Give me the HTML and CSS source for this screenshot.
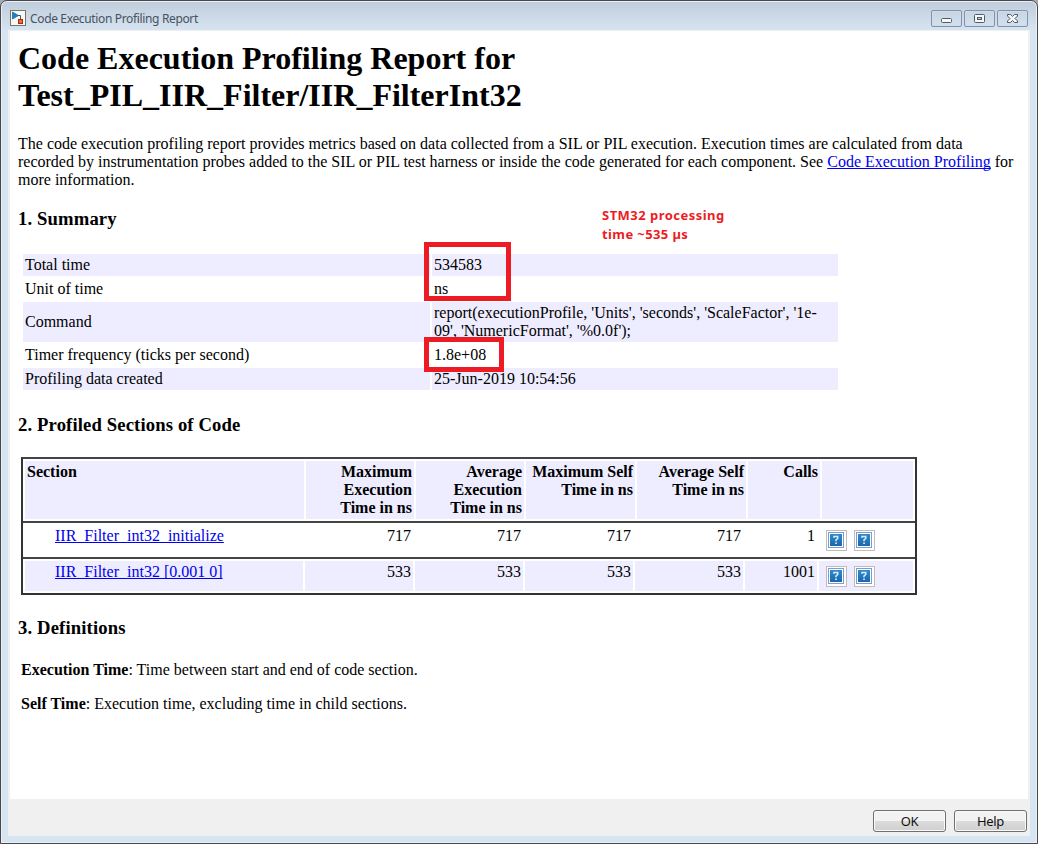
FILE: index.html
```html
<!DOCTYPE html>
<html lang="en">
<head>
<meta charset="utf-8">
<title>Code Execution Profiling Report</title>
<link rel="stylesheet" href="styles.css">
</head>
<body>
<svg width="0" height="0" class="defs" aria-hidden="true">
  <linearGradient id="blue" x1="0" y1="0" x2="0" y2="1"><stop offset="0" stop-color="#2f8acb"/><stop offset="1" stop-color="#1c68ad"/></linearGradient>
  <symbol id="help" viewBox="0 0 21 21">
    <rect x=".5" y=".5" width="20" height="20" fill="#fff" stroke="#bdbdbd"/>
    <rect x="2.5" y="2.5" width="15" height="15" fill="#fff" stroke="#7d9cd0"/>
    <rect x="4" y="4" width="12" height="12" fill="url(#blue)"/>
    <path d="M8 7.8V6.5H11.7V8.5L10 10V11.3M9.2 13.3H10.9" fill="none" stroke="#d9ecf8" stroke-width="1.6"/>
  </symbol>
</svg>
<div class="window">
  <header class="titlebar">
    <svg class="app-icon" width="16" height="16" viewBox="0 0 16 16">
      <rect x=".5" y=".5" width="15" height="15" fill="#f7f7f5" stroke="#77736d"/>
      <path d="M8 5.5H10.5V9" fill="none" stroke="#47555c"/>
      <path d="M2.5 2L8.5 5.5L2.5 9Z" fill="#1686ca" stroke="#17608d" stroke-width=".7"/>
      <rect x="8.5" y="9.5" width="4" height="4" fill="#ef683c" stroke="#a72c13"/>
    </svg>
    <span class="title">Code Execution Profiling Report</span>
    <div class="controls">
      <span class="control"><svg width="29" height="15" viewBox="0 0 29 15"><rect x="9.5" y="7.5" width="10" height="4" rx="1" fill="#f6f7f8" stroke="#535866"/></svg></span>
      <span class="control"><svg width="29" height="15" viewBox="0 0 29 15"><rect x="9.5" y="3.5" width="10" height="8" rx="1" fill="#f6f7f8" stroke="#535866"/><rect x="12.5" y="6.5" width="4" height="2" fill="#bfcddd" stroke="#535866"/></svg></span>
      <span class="control"><svg width="29" height="15" viewBox="0 0 29 15"><path d="M9.5 3.5H12.5L14.5 5.5L16.5 3.5H19.5V5L17 7.5L19.5 10V11.5H16.5L14.5 9.5L12.5 11.5H9.5V10L12 7.5L9.5 5Z" fill="#f6f7f8" stroke="#535866"/></svg></span>
    </div>
  </header>
  <div class="client">
    <main class="report">
      <h1>Code Execution Profiling Report for<br>Test_PIL_IIR_Filter/IIR_FilterInt32</h1>
      <p class="intro">The code execution profiling report provides metrics based on data collected from a SIL or PIL execution. Execution times are calculated from data<br>recorded by instrumentation probes added to the SIL or PIL test harness or inside the code generated for each component. See <a href="#">Code Execution Profiling</a> for<br>more information.</p>
      <h2 class="h-summary">1. Summary</h2>
      <div class="summary">
        <span class="shade">Total time</span><span class="shade">534583</span>
        <span>Unit of time</span><span>ns</span>
        <span class="shade">Command</span><span class="shade">report(executionProfile, 'Units', 'seconds', 'ScaleFactor', '1e-<br>09', 'NumericFormat', '%0.0f');</span>
        <span>Timer frequency (ticks per second)</span><span>1.8e+08</span>
        <span class="shade">Profiling data created</span><span class="shade">25-Jun-2019 10:54:56</span>
        <i class="mark mark-time"></i>
        <i class="mark mark-freq"></i>
        <b class="note">STM32 processing<br><span class="note-line">time ~535 µs</span></b>
      </div>
      <h2 class="h-sections">2. Profiled Sections of Code</h2>
      <div class="sections">
        <div class="row head">
          <span>Section</span><span>Maximum<br>Execution<br>Time in ns</span><span>Average<br>Execution<br>Time in ns</span><span>Maximum Self<br>Time in ns</span><span>Average Self<br>Time in ns</span><span>Calls</span><span></span>
        </div>
        <div class="row">
          <span><a href="#">IIR_Filter_int32_initialize</a></span><span>717</span><span>717</span><span>717</span><span>717</span><span>1</span><span class="icons"><svg><use href="#help"/></svg><svg><use href="#help"/></svg></span>
        </div>
        <div class="row tinted">
          <span><a href="#">IIR_Filter_int32 [0.001 0]</a></span><span>533</span><span>533</span><span>533</span><span>533</span><span>1001</span><span class="icons"><svg><use href="#help"/></svg><svg><use href="#help"/></svg></span>
        </div>
      </div>
      <h2 class="h-definitions">3. Definitions</h2>
      <p class="definition"><b>Execution Time</b>: Time between start and end of code section.</p>
      <p class="definition"><b>Self Time</b>: Execution time, excluding time in child sections.</p>
    </main>
    <footer class="footer"><button>OK</button><button>Help</button></footer>
  </div>
</div>
</body>
</html>
```
FILE: styles.css
```css
* { box-sizing: border-box; }
body { margin: 0; background: #a9aaad; overflow: hidden; }
.defs { position: absolute; }
.window {
  width: 1038px; height: 844px; padding: 0 7px 7px 6px;
  display: flex; flex-direction: column;
  border: 1px solid #4b484d; border-radius: 7px 7px 0 0;
  box-shadow: inset 0 0 0 1px #e9eff6;
  background: linear-gradient(#bfcddb 0, #d7e4f2 30px, #d7e4f2 100%);
}
.titlebar { flex: none; height: 29px; display: flex; align-items: flex-start; padding: 9px 2px 0 3px; }
.title { margin: 1px 0 0 4px; font: 12px/16px "Noto Sans", sans-serif; color: #48525f; letter-spacing: -.35px; white-space: nowrap; }
.controls { margin-left: auto; display: flex; gap: 2px; }
.control { width: 31px; height: 17px; border: 1px solid #8390ae; border-radius: 2px; box-shadow: inset 0 0 0 1px #d0dce8; }
.control svg { display: block; }
.client { flex: 1; min-height: 0; margin-left: 1px; display: flex; flex-direction: column; background: #f0f0f0; padding: 1px 2px 0 2px; }
.report { flex: none; height: 768px; background: #fff; padding: 9px 0 0 8px; font: 16px/18px "Liberation Serif", serif; color: #000; white-space: nowrap; }
h1 { margin: 0; font-size: 32px; line-height: 37px; }
.intro { margin: 21px 0 0; }
h2 { margin: 0; font-size: 18.67px; line-height: 22px; letter-spacing: .13px; }
a { color: #00e; text-decoration-skip-ink: none; }
.h-summary { margin-top: 19px; }
.summary { position: relative; width: 815px; margin: 24px 0 0 5px; display: grid; grid-template-columns: 407px 406px; gap: 2px; }
.summary > span { padding: 2px; display: flex; align-items: center; }
.shade { background: #eeedff; }
.mark { position: absolute; border: 5px solid #ed1c24; }
.mark-time { left: 401px; top: -12px; width: 87px; height: 59px; }
.mark-freq { left: 401px; top: 83px; width: 80px; height: 35px; }
.note { position: absolute; left: 579px; top: -48px; font: bold 13px/19px "Noto Sans", sans-serif; letter-spacing: .47px; color: #ed1c24; }
.note-line { letter-spacing: .4px; }
.h-sections { margin-top: 24px; }
.sections { width: 896px; margin: 21px 0 0 3px; border: 2px solid #333; border-top-color: #444; }
.row { display: grid; grid-template-columns: 278px 108px 108px 108px 108px 72px 94px; gap: 2px; padding: 2px; height: 36px; border-top: 2px solid #444; }
.row > span { padding: 2px; text-align: right; }
.row > span:first-child { text-align: left; padding-left: 30px; }
.row.head { grid-template-columns: 279px 108px 108px 109px 109px 72px 91px; height: 62px; border: 0; font-weight: bold; }
.row.head > span { background: #eeedff; }
.row.head > span:first-child { padding-left: 2px; }
.row.tinted > span { background: #eeedff; }
.row > .icons { display: flex; gap: 7px; padding: 5px 0 0 7px; }
.icons svg { width: 21px; height: 21px; flex: none; }
.h-definitions { margin-top: 22px; }
.definition { margin: 16px 0 0 3px; }
.h-definitions + .definition { margin-top: 22px; }
.footer { display: flex; justify-content: flex-end; gap: 8px; padding: 11px 1px 0 0; }
button { width: 73px; height: 22px; padding: 0; border: 1px solid #707070; border-radius: 3px; box-shadow: inset 0 0 0 1px #fafafa; background: linear-gradient(#f2f2f2 0 50%, #dcdcdc 50%, #cfcfcf); font: 13px/18px "Noto Sans", sans-serif; letter-spacing: -.3px; color: #111; }
```
